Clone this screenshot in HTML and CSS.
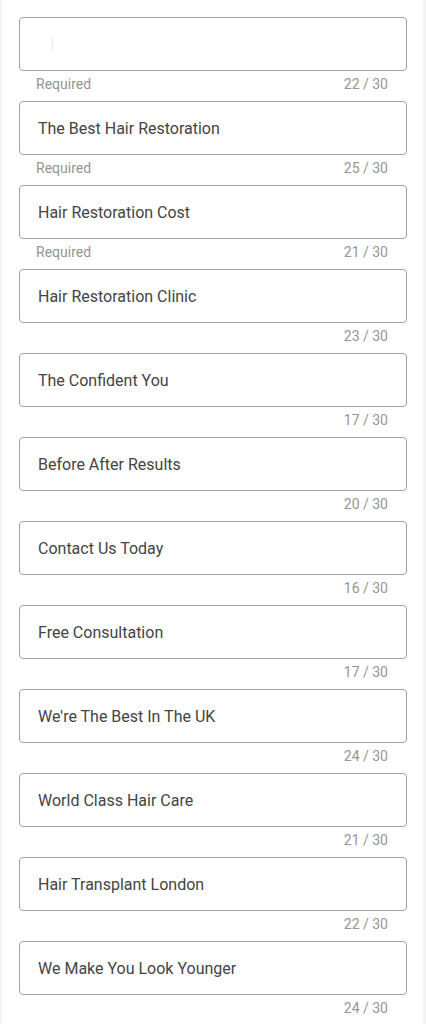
FILE: index.html
```html
<!DOCTYPE html>
<html>
<head>
<meta charset="utf-8">
<link rel="stylesheet" href="styles.css">
</head>
<body>
<div class="page">
  <div class="field">
    <div class="box"><span class="caret"></span></div>
    <div class="helper"><span>Required</span><span>22 / 30</span></div>
  </div>
  <div class="field">
    <div class="box">The Best Hair Restoration</div>
    <div class="helper"><span>Required</span><span>25 / 30</span></div>
  </div>
  <div class="field">
    <div class="box">Hair Restoration Cost</div>
    <div class="helper"><span>Required</span><span>21 / 30</span></div>
  </div>
  <div class="field">
    <div class="box">Hair Restoration Clinic</div>
    <div class="helper"><span></span><span>23 / 30</span></div>
  </div>
  <div class="field">
    <div class="box">The Confident You</div>
    <div class="helper"><span></span><span>17 / 30</span></div>
  </div>
  <div class="field">
    <div class="box">Before After Results</div>
    <div class="helper"><span></span><span>20 / 30</span></div>
  </div>
  <div class="field">
    <div class="box">Contact Us Today</div>
    <div class="helper"><span></span><span>16 / 30</span></div>
  </div>
  <div class="field">
    <div class="box">Free Consultation</div>
    <div class="helper"><span></span><span>17 / 30</span></div>
  </div>
  <div class="field">
    <div class="box">We're The Best In The UK</div>
    <div class="helper"><span></span><span>24 / 30</span></div>
  </div>
  <div class="field">
    <div class="box">World Class Hair Care</div>
    <div class="helper"><span></span><span>21 / 30</span></div>
  </div>
  <div class="field">
    <div class="box">Hair Transplant London</div>
    <div class="helper"><span></span><span>22 / 30</span></div>
  </div>
  <div class="field">
    <div class="box">We Make You Look Younger</div>
    <div class="helper"><span></span><span>24 / 30</span></div>
  </div>
</div>
</body>
</html>
```
FILE: styles.css
```css
html, body {
  margin: 0;
  padding: 0;
  background: #fff;
}
body {
  font-family: Roboto, "Noto Sans", sans-serif;
}
.page {
  width: 426px;
  min-height: 1024px;
  box-sizing: border-box;
  padding: 17px 0 0 0;
  border-left: 2px solid #f3f3f3;
  border-right: 3px solid #f3f3f3;
  display: flex;
  flex-direction: column;
}
.field {
  display: flex;
  flex-direction: column;
  padding: 0 16px 0 17px;
  height: 84px;
}
.box {
  height: 54px;
  box-sizing: border-box;
  border: 1.5px solid #a3a3a3;
  border-radius: 4px;
  display: flex;
  align-items: center;
  padding-left: 18px;
  font-size: 16px;
  color: #444;
}
.caret {
  width: 1px;
  height: 12px;
  margin-left: 14px;
  background: #e6e6e6;
}
.helper {
  display: flex;
  justify-content: space-between;
  padding: 5px 19px 0 17px;
  font-size: 14px;
  line-height: 16px;
  color: #959595;
}
```
